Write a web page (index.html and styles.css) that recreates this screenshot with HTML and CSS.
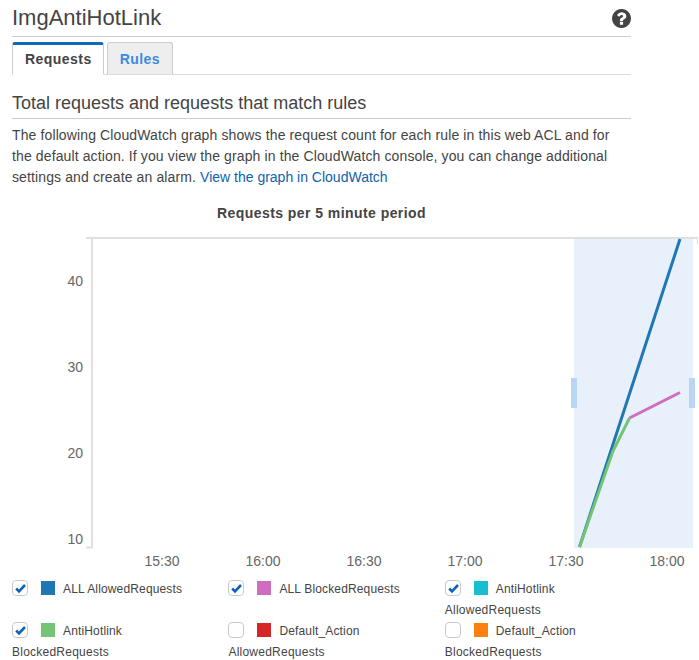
FILE: index.html
```html
<!DOCTYPE html>
<html lang="en">
<head>
<meta charset="utf-8">
<title>ImgAntiHotLink</title>
<link rel="stylesheet" href="styles.css">
</head>
<body>
<div class="content">
  <header class="title-bar">
    <h1>ImgAntiHotLink</h1>
    <svg class="help" viewBox="0 128 1536 1536" aria-label="Help"><path d="M896 1376v-192q0-14-9-23t-23-9h-192q-14 0-23 9t-9 23v192q0 14 9 23t23 9h192q14 0 23-9t9-23zm256-672q0-88-55.5-163t-138.5-116-170-41q-243 0-371 213-15 24 8 42l132 100q7 6 19 6 16 0 25-12 53-68 86-92 34-24 86-24 48 0 85.5 26t37.5 59q0 38-20 61t-68 45q-63 28-115.5 86.5t-52.5 125.5v36q0 14 9 23t23 9h192q14 0 23-9t9-23q0-19 21.5-49.5t54.5-49.5q32-18 49-28.5t46-35 44.5-48 28-60.5 12.5-81zm384 192q0 209-103 385.5t-279.5 279.5-385.5 103-385.5-103-279.5-279.5-103-385.5 103-385.5 279.5-279.5 385.5-103 385.5 103 279.5 279.5 103 385.5z"/></svg>
  </header>
  <nav class="tabs">
    <a class="tab active">Requests</a>
    <a class="tab">Rules</a>
  </nav>
  <h2>Total requests and requests that match rules</h2>
  <p class="intro">The following CloudWatch graph shows the request count for each rule in this web ACL and for the default action. If you view the graph in the CloudWatch console, you can change additional settings and create an alarm. <a class="link">View the graph in CloudWatch</a></p>
  <div class="chart-title">Requests per 5 minute period</div>
</div>
<svg class="chart" viewBox="0 0 699 350" width="699" height="350">
  <rect class="selection" x="574" y="13" width="119" height="310"/>
  <path class="axis" d="M86 13H698M92 13V322.500H86"/>
  <path class="axis-thin" d="M697.500 13V19"/>
  <g class="y-labels">
    <text x="83" y="61">40</text>
    <text x="83" y="147">30</text>
    <text x="83" y="233">20</text>
    <text x="83" y="319">10</text>
  </g>
  <g class="x-labels">
    <text x="162" y="341">15:30</text>
    <text x="263" y="341">16:00</text>
    <text x="364" y="341">16:30</text>
    <text x="465" y="341">17:00</text>
    <text x="566" y="341">17:30</text>
    <text x="667" y="341">18:00</text>
  </g>
  <path class="line blue" d="M579.500 322L680 14"/>
  <path class="line pink" d="M629.500 193L680 167.500"/>
  <path class="line green" d="M579.500 322L613 226L629.500 193"/>
  <rect class="handle" x="571" y="153" width="6" height="30"/>
  <rect class="handle" x="689" y="153" width="6" height="30"/>
</svg>
<div class="legend">
  <div class="legend-item"><div class="legend-head"><span class="check"><svg viewBox="0 0 14 14"><path d="M3.200 7.500L6 10.300L12 4"/></svg></span><span class="swatch c-blue"></span><span class="name">ALL AllowedRequests</span></div></div>
  <div class="legend-item"><div class="legend-head"><span class="check"><svg viewBox="0 0 14 14"><path d="M3.200 7.500L6 10.300L12 4"/></svg></span><span class="swatch c-pink"></span><span class="name">ALL BlockedRequests</span></div></div>
  <div class="legend-item"><div class="legend-head"><span class="check"><svg viewBox="0 0 14 14"><path d="M3.200 7.500L6 10.300L12 4"/></svg></span><span class="swatch c-cyan"></span><span class="name">AntiHotlink</span></div>AllowedRequests</div>
  <div class="legend-item"><div class="legend-head"><span class="check"><svg viewBox="0 0 14 14"><path d="M3.200 7.500L6 10.300L12 4"/></svg></span><span class="swatch c-green"></span><span class="name">AntiHotlink</span></div>BlockedRequests</div>
  <div class="legend-item"><div class="legend-head"><span class="check"></span><span class="swatch c-red"></span><span class="name">Default_Action</span></div>AllowedRequests</div>
  <div class="legend-item"><div class="legend-head"><span class="check"></span><span class="swatch c-orange"></span><span class="name">Default_Action</span></div>BlockedRequests</div>
</div>
</body>
</html>
```
FILE: styles.css
```css
* { box-sizing: border-box; }
html, body { margin: 0; padding: 0; background: #fff; }
body {
  width: 699px;
  height: 660px;
  overflow: hidden;
  font-family: "Liberation Sans", Arial, sans-serif;
  font-size: 14px;
  color: #444;
}
.content { width: 619px; margin-left: 12px; }
.title-bar {
  display: flex;
  justify-content: space-between;
  align-items: center;
  height: 37px;
  border-bottom: 1px solid #ccc;
}
h1 { margin: 0; font-size: 22px; font-weight: 400; line-height: 36px; color: #444; }
.help { width: 19px; height: 19px; fill: #444; }
.tabs {
  display: flex;
  gap: 3px;
  align-items: flex-end;
  height: 38px;
  padding-top: 5px;
  border-bottom: 1px solid #ddd;
}
.tab {
  display: block;
  font-weight: 700;
  font-size: 14px;
  letter-spacing: 0.45px;
  line-height: 32px;
  height: 32px;
  padding: 0 12px;
  color: #3b8ae0;
  background: #eee;
  border: 1px solid #ccc;
  border-bottom: 0;
  border-radius: 3px 3px 0 0;
}
.tab.active {
  background: #fff;
  color: #444;
  padding-right: 11px;
  border-top: 3px solid #0f6ab8;
  border-bottom: 1px solid #fff;
  height: 33px;
  margin-bottom: -1px;
  line-height: 28px;
}
h2 {
  margin: 16px 0 0;
  height: 28px;
  font-size: 18px;
  font-weight: 400;
  line-height: 24px;
  color: #444;
  border-bottom: 1px solid #ccc;
}
.intro { margin: 6px 0 0; line-height: 21px; letter-spacing: 0.12px; }
.link { color: #0f62b0; letter-spacing: 0; }
.chart-title {
  margin-top: 14px;
  height: 23px;
  font-weight: 700;
  line-height: 22px;
  letter-spacing: 0.44px;
  text-align: center;
}
.chart { display: block; }
.selection { fill: #e8f1fb; }
.axis { fill: none; stroke: #e0e0e0; stroke-width: 2; }
.axis-thin { fill: none; stroke: #ddd; stroke-width: 1; }
.y-labels text { font-size: 14px; fill: #666; text-anchor: end; }
.x-labels text { font-size: 14px; fill: #666; text-anchor: middle; }
.line { fill: none; stroke-width: 3; }
.blue { stroke: #1f77b4; }
.pink { stroke: #ce6dbd; }
.green { stroke: #74c476; }
.handle { fill: #b8d5f3; }
.legend {
  display: grid;
  grid-template-columns: 216.400px 216.400px 216.400px;
  grid-auto-rows: 42px;
  margin-left: 12px;
  margin-top: 3px;
  font-size: 12px;
  letter-spacing: 0.24px;
  line-height: 21px;
  color: #444;
}
.legend-item { white-space: nowrap; }
.legend-head {
  display: flex;
  align-items: center;
  height: 20px;
  margin-bottom: 2px;
}
.check {
  flex: none;
  width: 16px;
  height: 16px;
  border: 1px solid #c8c8c8;
  border-radius: 4px;
  margin-right: 13px;
  background: #fff;
}
.check svg { display: block; width: 14px; height: 14px; fill: none; stroke: #0f62b8; stroke-width: 2.600; }
.swatch {
  flex: none;
  width: 14px;
  height: 14px;
  margin-right: 8px;
}
.name { letter-spacing: 0.15px; padding-top: 2px; }
.c-blue { background: #1f77b4; }
.c-pink { background: #ce6dbd; }
.c-cyan { background: #17becf; }
.c-green { background: #74c476; }
.c-red { background: #d62728; }
.c-orange { background: #ff7f0e; }
```
